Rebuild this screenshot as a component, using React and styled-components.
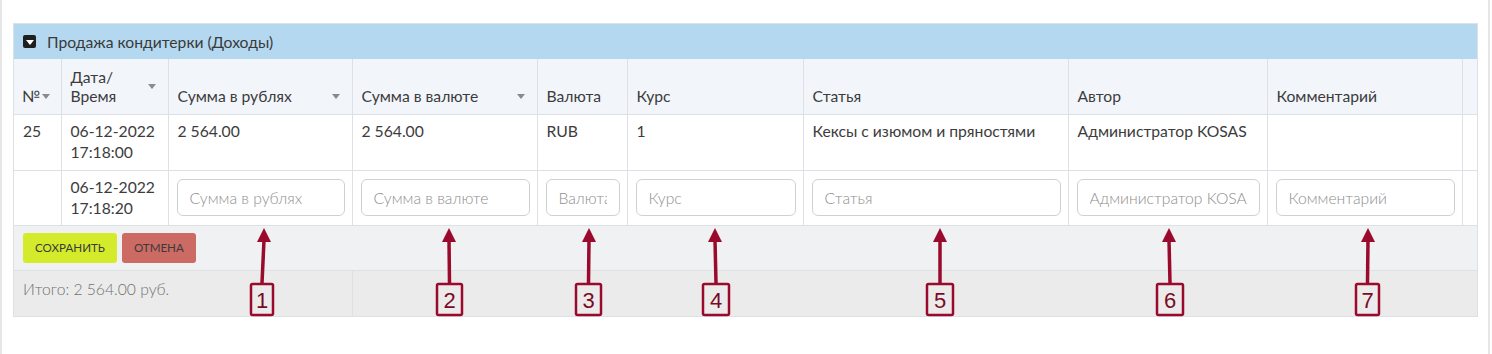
import React from 'react';
import styled, { createGlobalStyle } from 'styled-components';

const GlobalStyle = createGlobalStyle`
  html, body {
    margin: 0;
    padding: 0;
    background: #fff;
  }
  body {
    font-family: Lato, "Noto Sans", sans-serif;
    color: #333;
  }
`;

const Frame = styled.div`
  position: relative;
  box-sizing: border-box;
  width: 1490px;
  height: 354px;
  border-left: 2px solid #e6e6e6;
  border-right: 2px solid #e6e6e6;
  padding: 23px 0 0 11px;
`;

const Panel = styled.div`
  width: 1465px;
  border: 1px solid #dde0e4;
  box-sizing: border-box;
`;

const PanelHead = styled.div`
  display: flex;
  align-items: center;
  gap: 11px;
  height: 35px;
  padding-left: 9px;
  background: #b3d8f0;
  font-size: 15.7px;
  color: #3a3a3a;
`;

const Toggle = styled.span`
  display: inline-flex;
  align-items: center;
  justify-content: center;
  width: 13px;
  height: 13px;
  border-radius: 2px;
  background: #1f1f1f;
  &::after {
    content: '';
    border-left: 4px solid transparent;
    border-right: 4px solid transparent;
    border-top: 5px solid #fff;
    margin-top: 1px;
  }
`;

const Table = styled.table`
  width: 100%;
  border-collapse: collapse;
  table-layout: fixed;
  font-size: 15.7px;
`;

const Th = styled.th`
  height: 55px;
  box-sizing: border-box;
  padding: 0 10px 8px 9px;
  background: #f2f6fb;
  border-right: 1px solid #dde0e4;
  border-bottom: 1px solid #dde0e4;
  font-weight: 400;
  text-align: left;
  vertical-align: bottom;
  line-height: 19px;
  color: #3c3c3c;
  &:last-child { border-right: none; }
`;

const HeadInner = styled.div`
  display: flex;
  align-items: center;
  justify-content: ${(p) => (p.$tight ? 'flex-start' : 'space-between')};
  gap: 2px;
`;

const Caret = styled.span`
  flex: none;
  width: 0;
  height: 0;
  border-left: 4px solid transparent;
  border-right: 4px solid transparent;
  border-top: 5px solid #8a8a8a;
  margin-right: ${(p) => (p.$tight ? '0' : '2px')};
`;

const Td = styled.td`
  box-sizing: border-box;
  height: ${(p) => p.$h || 56}px;
  padding: ${(p) => p.$pad || '6px 9px'};
  border-right: 1px solid #dde0e4;
  border-bottom: 1px solid #dde0e4;
  vertical-align: ${(p) => p.$valign || 'top'};
  line-height: 21px;
  color: #3c3c3c;
  &:last-child { border-right: none; }
`;

const Input = styled.input`
  box-sizing: border-box;
  width: 100%;
  height: 37px;
  padding: 0 12px;
  border: 1px solid #d0d0d0;
  border-radius: 6px;
  background: #fff;
  font-family: Lato, "Noto Sans", sans-serif;
  font-size: 15.7px;
  font-weight: 300;
  color: #333;
  outline: none;
  &::placeholder { color: #8e8e8e; }
`;

const ActionCell = styled.td`
  height: 45px;
  box-sizing: border-box;
  padding: 0 9px;
  background: #f0f1f3;
  border-bottom: 1px solid #dde0e4;
`;

const Actions = styled.div`
  display: flex;
  gap: 5px;
`;

const Button = styled.button`
  height: 30px;
  padding: 0 ${(p) => p.$px}px;
  border: none;
  border-radius: 3px;
  background: ${(p) => p.$bg};
  color: #3a3a3a;
  font-family: Lato, "Noto Sans", sans-serif;
  font-size: 11.6px;
  text-transform: uppercase;
  cursor: pointer;
`;

const TotalCell = styled.td`
  height: 46px;
  box-sizing: border-box;
  padding: 8px 9px;
  background: #ebebeb;
  border-right: 1px solid #dde0e4;
  vertical-align: top;
  color: #707070;
  font-weight: 300;
  line-height: 20px;
  &:last-child { border-right: none; }
`;

const Overlay = styled.svg`
  position: absolute;
  left: 0;
  top: 0;
  pointer-events: none;
`;

const widths = [47, 107, 184, 185, 90, 176, 265, 199, 195, 15];

const headers = [
  { label: '№', caret: true, tight: true },
  { label: <>Дата/<br />Время</>, caret: true },
  { label: 'Сумма в рублях', caret: true },
  { label: 'Сумма в валюте', caret: true },
  { label: 'Валюта' },
  { label: 'Курс' },
  { label: 'Статья' },
  { label: 'Автор' },
  { label: 'Комментарий' },
  { label: '' },
];

const row = ['25', <>06-12-2022<br />17:18:00</>, '2 564.00', '2 564.00', 'RUB', '1',
  'Кексы с изюмом и пряностями', 'Администратор KOSAS', '', ''];

const inputs = ['Сумма в рублях', 'Сумма в валюте', 'Валюта', 'Курс', 'Статья',
  'Администратор KOSAS', 'Комментарий'];

const marks = [
  { n: 1, tip: 262, box: 249, w: 22 },
  { n: 2, tip: 447, box: 435, w: 25 },
  { n: 3, tip: 587, box: 574, w: 25 },
  { n: 4, tip: 713, box: 701, w: 26 },
  { n: 5, tip: 938, box: 925, w: 26 },
  { n: 6, tip: 1167, box: 1155, w: 26 },
  { n: 7, tip: 1366, box: 1354, w: 23 },
];

const Marks = () => (
  <Overlay width="1492" height="354">
    {marks.map((m) => {
      const base = m.box + m.w / 2;
      return (
        <g key={m.n}>
          <line x1={base} y1={283} x2={m.tip} y2={240} stroke="#9a0a2c" strokeWidth="3.5" />
          <polygon points={`${m.tip},228 ${m.tip - 7},242 ${m.tip + 7},242`} fill="#9a0a2c" />
          <rect x={m.box} y={284} width={m.w} height={31} rx="1.5" fill="none" stroke="#9a0a2c" strokeWidth="2.5" />
          <text x={base} y={308} textAnchor="middle" fontFamily="Liberation Sans, Arial, sans-serif" fontSize="22" fill="#7a0a24">{m.n}</text>
        </g>
      );
    })}
  </Overlay>
);

const App = () => (
  <Frame>
    <GlobalStyle />
    <Panel>
      <PanelHead>
        <Toggle />
        Продажа кондитерки (Доходы)
      </PanelHead>
      <Table>
        <colgroup>
          {widths.map((w, i) => <col key={i} style={{ width: w }} />)}
        </colgroup>
        <thead>
          <tr>
            {headers.map((h, i) => (
              <Th key={i} style={i === 0 ? { paddingLeft: 8, paddingRight: 2 } : undefined}>
                <HeadInner $tight={h.tight}>
                  <span>{h.label}</span>
                  {h.caret && <Caret $tight={h.tight} />}
                </HeadInner>
              </Th>
            ))}
          </tr>
        </thead>
        <tbody>
          <tr>
            {row.map((c, i) => <Td key={i}>{c}</Td>)}
          </tr>
          <tr>
            <Td $h={55} />
            <Td $h={55} $valign="middle" $pad="0 9px">06-12-2022<br />17:18:20</Td>
            {inputs.map((p, i) => (
              <Td key={i} $h={55} $valign="middle" $pad="0 7px 0 8px">
                <Input placeholder={p} />
              </Td>
            ))}
            <Td $h={55} />
          </tr>
          <tr>
            <ActionCell colSpan={10}>
              <Actions>
                <Button $bg="#d3eb2b" $px={12}>Сохранить</Button>
                <Button $bg="#cc6a64" $px={12}>Отмена</Button>
              </Actions>
            </ActionCell>
          </tr>
          <tr>
            <TotalCell colSpan={3}>Итого: 2 564.00 руб.</TotalCell>
            <TotalCell colSpan={7} />
          </tr>
        </tbody>
      </Table>
    </Panel>
    <Marks />
  </Frame>
);

export default App;
